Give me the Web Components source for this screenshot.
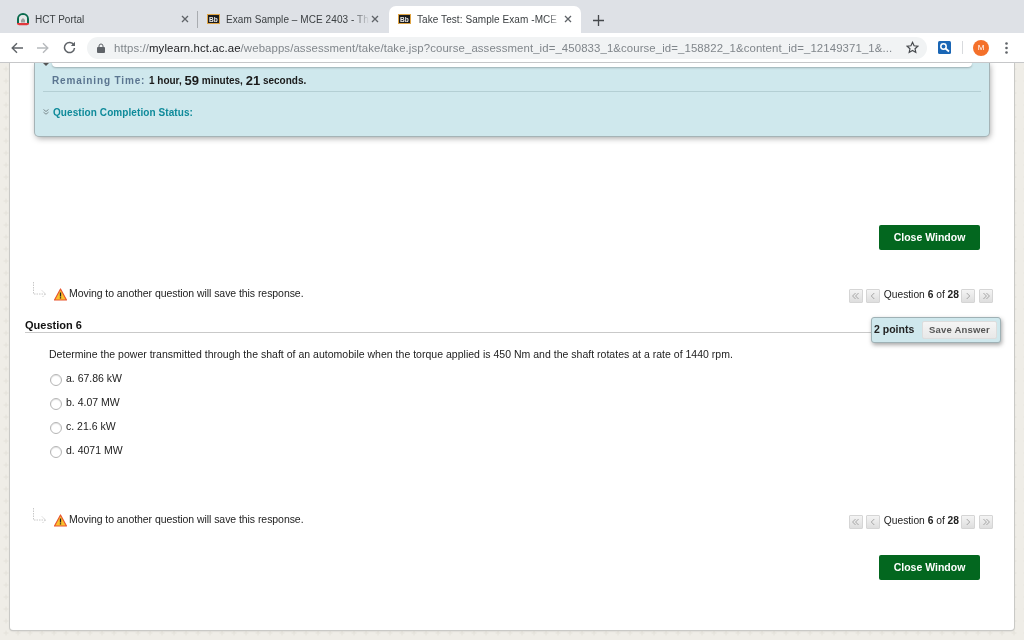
<!DOCTYPE html>
<html><head><meta charset="utf-8"><style>
html,body{margin:0;padding:0;width:1024px;height:640px;overflow:hidden;background:#fff;font-family:"Liberation Sans",Arial,sans-serif}
body{display:flex;flex-direction:column}
</style></head><body>
<browser-chrome></browser-chrome>
<page-view>
  <test-status></test-status>
  <close-bar style="--top:89px"></close-bar>
  <nav-row style="--top:33px"></nav-row>
  <question-block></question-block>
  <nav-row style="--top:47px"></nav-row>
  <close-bar style="--top:26px"></close-bar>
</page-view>
<script>
const def=(n,css,html)=>customElements.define(n,class extends HTMLElement{constructor(){super();this.attachShadow({mode:'open'}).innerHTML=`<style>${css}</style>${html}`}});
const bb=`<svg width="13" height="10" viewBox="0 0 13 10"><rect x=".5" y=".5" width="12" height="9" fill="#1c1c1c" stroke="#e0a545"/><text x="6.500" y="7.500" font-size="6.500" font-weight="700" fill="#eee" text-anchor="middle" font-family="Liberation Sans">Bb</text></svg>`;
const x=`<svg class="x" width="8" height="8" viewBox="0 0 8 8"><path d="M1 1l6 6M7 1l-6 6" stroke="#5f6368" stroke-width="1.300"/></svg>`;
def('browser-chrome',`
:host{display:block;flex:none;font-family:"Liberation Sans",sans-serif;position:relative;z-index:2;filter:blur(.25px)}
.strip{height:33px;background:#dee1e6;display:flex;align-items:flex-end;padding-left:8px;box-sizing:border-box}
.tab{height:26px;display:flex;align-items:center;box-sizing:border-box;font-size:10px;color:#3c4043;letter-spacing:.07px;white-space:nowrap;overflow:hidden}
.tab span{flex:1;overflow:hidden;margin-left:6px;-webkit-mask-image:linear-gradient(90deg,#000 88%,transparent 99%)}
.t1{width:189px;padding:0 0 2px 8px}.t1 .x{margin-right:8px}.t1 span{margin-left:5px;-webkit-mask-image:none;letter-spacing:0}
.sep{width:1px;height:17px;background:#a9acb0;margin:0 0 5px 0;flex:none}
.t2{width:185px;padding:0 0 2px 9px}.t2 .x{margin-right:4px}
.t3{width:192px;height:27px;background:#fff;border-radius:7px 7px 0 0;padding:0 0 1px 9px;margin-left:6px}.t3 .x{margin-right:9px}
.plus{margin:0 0 7px 12px;flex:none}
.tool{height:30px;background:#fff;border-bottom:1px solid #c6c7c9;display:flex;align-items:center;box-sizing:border-box;padding-left:11px;position:relative}
.omni{width:840px;height:22px;margin-left:11px;background:#f1f3f4;border-radius:11px;display:flex;align-items:center;box-sizing:border-box;padding:0 8px 0 10px;font-size:11.400px;letter-spacing:.1px;color:#80868b;white-space:nowrap}
.omni b{font-weight:400;color:#202124}
.omni .u{flex:1;overflow:hidden;margin-left:9px}
.ext{width:13px;height:13px;margin-left:11px;flex:none}
.div{width:1px;height:13px;background:#d8dadd;margin:0 10px 0 11px;flex:none}
.av{width:16px;height:16px;border-radius:50%;background:#f4702a;color:#fff;font-size:8px;display:flex;align-items:center;justify-content:center;flex:none}
.dots{margin-left:16px;flex:none}
svg{flex:none;display:block}
`,`<div class="strip">
<div class="tab t1"><svg width="14" height="14" viewBox="0 0 14 14"><path d="M1 11V7a6 6 0 0 1 12 0v4h-2V7a4 4 0 0 0-8 0v4z" fill="#0b6b4e"/><path d="M3 11V7.200a4 4 0 0 1 8 0V11z" fill="#e6e8e8"/><path d="M5 10.500V8l2-2 2 2v2.500z" fill="#9aa09e"/><path d="M1 11h12v1.300l-2 1H3l-2-1z" fill="#e2393d"/></svg><span>HCT Portal</span>${x}</div>
<div class="sep"></div>
<div class="tab t2">${bb}<span>Exam Sample – MCE 2403 - Th</span>${x}</div>
<div class="tab t3">${bb}<span>Take Test: Sample Exam -MCE</span>${x}</div>
<svg class="plus" width="11" height="11" viewBox="0 0 11 11"><path d="M5.500 0v11M0 5.500h11" stroke="#45484c" stroke-width="1.300"/></svg>
</div>
<div class="tool">
<svg width="12" height="12" viewBox="0 0 12 12"><path d="M12 6H1.500M6 1.200 1.200 6 6 10.800" fill="none" stroke="#5f6368" stroke-width="1.400"/></svg>
<svg style="margin-left:14px" width="12" height="12" viewBox="0 0 12 12"><path d="M0 6h10.500M6 1.200 10.800 6 6 10.800" fill="none" stroke="#b7babd" stroke-width="1.400"/></svg>
<svg style="margin-left:14px" width="13" height="13" viewBox="0 0 13 13"><path d="M10.800 4A5 5 0 1 0 11.500 7" fill="none" stroke="#5f6368" stroke-width="1.500"/><path d="M12 .8V5H7.800z" fill="#5f6368"/></svg>
<div class="omni"><svg width="8" height="10" viewBox="0 0 8 10"><path d="M2 4.500V3a2 2 0 0 1 4 0v1.500" fill="none" stroke="#5f6368"/><rect y="4" width="8" height="6" rx="1" fill="#5f6368"/></svg>
<div class="u">https://<b>mylearn.hct.ac.ae</b>/webapps/assessment/take/take.jsp?course_assessment_id=_450833_1&amp;course_id=_158822_1&amp;content_id=_12149371_1&amp;...</div>
<svg width="13" height="13" viewBox="0 0 24 24" style="margin-left:7px"><path d="M12 2.500l2.900 6.300 6.900.8-5.100 4.700 1.400 6.800L12 17.600 5.900 21.100l1.400-6.800-5.100-4.700 6.900-.8z" fill="none" stroke="#45484c" stroke-width="2.200"/></svg></div>
<svg class="ext" viewBox="0 0 13 13"><rect width="13" height="13" rx="1.500" fill="#1a66b5"/><circle cx="5.500" cy="5.500" r="2.700" fill="none" stroke="#fff" stroke-width="1.500"/><path d="M7.500 7.500 11 10.500" stroke="#fff" stroke-width="1.800"/></svg>
<div class="div"></div><div class="av">M</div>
<svg class="dots" width="3" height="12" viewBox="0 0 3 12"><circle cx="1.500" cy="1.500" r="1.300" fill="#5f6368"/><circle cx="1.500" cy="6" r="1.300" fill="#5f6368"/><circle cx="1.500" cy="10.500" r="1.300" fill="#5f6368"/></svg>
</div>`);
def('page-view',`
:host{display:block;flex:1;min-height:0;overflow:hidden;box-sizing:border-box;padding:0 10px 10px;filter:blur(.3px);
background-color:#efede7;background-image:url("data:image/svg+xml,%3Csvg xmlns='http://www.w3.org/2000/svg' width='12' height='12'%3E%3Cpath d='M6 3.500v5M3.500 6h5' stroke='%23e4e2da' stroke-width='1'/%3E%3C/svg%3E");background-size:12px 12px}
.panel{height:100%;background:#fff;border-radius:0 0 3px 3px;box-shadow:0 0 0 1px #c9c9c6,0 1px 2px rgba(0,0,0,.2);box-sizing:border-box;overflow:hidden}
`,`<div class="panel"><slot></slot></div>`);
def('test-status',`
:host{display:block;margin:0 25px 0;height:73px;background:#cfe8ed;border-radius:0 0 4px 4px;box-shadow:0 0 0 1px #a5b3b6,1px 2px 6px rgba(0,0,0,.38);position:relative;padding:0 17px 0 8px;box-sizing:border-box;font-size:10px}
.top{height:4px;margin:0 0 0 9px;background:#fff;border-radius:0 0 4px 4px;box-shadow:0 1px 2px rgba(0,0,0,.25)}
.time{height:24px;display:flex;align-items:center;margin-left:9px;font-weight:700;color:#1a1a1a;padding-top:2px;box-sizing:border-box;white-space:pre}
.time .l{color:#5b7590;letter-spacing:.86px}
.time big{font-size:13px}
.line{height:1px;background:#b4cfd4;margin-right:-9px}
.st{display:flex;align-items:center;height:40px;font-weight:700;color:#0e8a9a;box-sizing:border-box;letter-spacing:.08px}
.st svg{margin-right:4px}
.tick{position:absolute;left:8px;top:0;width:0;height:0;border:3px solid transparent;border-top:3px solid #555}
`,`<div class="tick"></div><div class="top"></div><div class="time"><span class="l">Remaining Time: </span>1 hour, <big>59</big> minutes, <big>21</big> seconds.</div><div class="line"></div>
<div class="st"><svg width="6" height="6" viewBox="0 0 6 6"><path d="M.5 .5l2.500 2 2.500-2M.5 3.200l2.500 2 2.500-2" fill="none" stroke="#7d8c90"/></svg>Question Completion Status:</div>`);
def('close-bar',`
:host{margin-top:var(--top);height:25px;display:flex;justify-content:flex-end;padding-right:34px}
.b{width:101px;height:25px;padding-bottom:2px;box-sizing:border-box;background:#03671f;border-radius:2px;color:#fff;font-weight:700;font-size:10.500px;display:flex;align-items:center;justify-content:center;font-family:"Liberation Sans",sans-serif}
`,`<div class="b">Close Window</div>`);
const arrow=`<svg width="16" height="16" viewBox="0 0 16 16"><path d="M1.500 0v12h12M10 8.500l3.500 3.500-3.500 3.500" fill="none" stroke="#c8c8c8" stroke-dasharray="1.500 1"/></svg>`;
const warn=`<svg width="13" height="13" viewBox="0 0 13 13"><path d="M6.500 1 12.500 12H.5z" fill="#fbc02d" stroke="#e8552f" stroke-width="1.200" stroke-linejoin="round"/><path d="M6.500 4.500v4M6.500 9.300v1.200" stroke="#222" stroke-width="1.300"/></svg>`;
const pg=(d)=>`<svg class="p" width="14" height="14" viewBox="0 0 14 14"><path d="${d}" fill="none" stroke="#999"/></svg>`;
def('nav-row',`
:host{display:flex;margin-top:var(--top);height:20px;align-items:center;padding:0 21px 0 22px;font-size:10.500px;color:#222}
.m{display:flex;align-items:center;flex:1;letter-spacing:-.06px}
.m svg:first-child{margin-right:6px;margin-top:-6px}.m svg:nth-child(2){margin-right:2px;margin-top:2px}
.pg{display:flex;align-items:center;gap:3px;white-space:pre;margin-top:5px;font-size:10.250px}
.p{background:linear-gradient(#f4f4f4,#dedede);border:1px solid #d5d5d5;border-radius:1px;box-sizing:border-box;}
.t{margin:0 -1px 2px 1px}
.p:last-child{margin-left:1px}
`,`<div class="m">${arrow}${warn}<span>Moving to another question will save this response.</span></div>
<div class="pg">${pg('M6.500 3.500 3 7l3.500 3.500M10 3.500 6.500 7l3.500 3.500')}${pg('M8.500 3.500 5 7l3.500 3.500')}<span class="t">Question <b>6</b> of <b>28</b></span>${pg('M5.500 3.500 9 7l-3.500 3.500')}${pg('M4 3.500 7.500 7 4 10.500M7.500 3.500 11 7l-3.500 3.500')}</div>`);
def('question-block',`
:host{display:block;margin-top:15px;padding:0 14px 0 15px;font-size:10.500px;color:#222;position:relative}
.h{height:14px;border-bottom:1px solid #c9c9c9;font-weight:700;font-size:11px;color:#111;line-height:14px}
.pts{position:absolute;right:13px;top:-1px;width:130px;height:26px;box-sizing:border-box;background:#cfe8ed;border:1px solid #9fb1b5;border-radius:3px;box-shadow:1px 2px 4px rgba(0,0,0,.35);display:flex;align-items:center;justify-content:space-between;padding:0 3px 0 2px;font-weight:700;font-size:10.500px;color:#222}
.pl{margin-bottom:2px}
.sv{width:75px;height:18px;background:linear-gradient(#f5f5f5,#e8e8e8);border-radius:2px;border:1px solid #ddd;box-sizing:border-box;display:flex;align-items:center;justify-content:center;font-size:9.500px;color:#555;letter-spacing:.2px;padding-bottom:1px}
.q{margin:15px 0 6px 24px;line-height:12px;height:12px;letter-spacing:.015px}
.o{display:flex;align-items:center;height:24px;margin-left:25px}
.r{width:12px;height:12px;border-radius:50%;border:1px solid #b5b5b5;box-sizing:border-box;background:#fff;margin:3px 4px 0 0;box-shadow:inset 0 1px 1px #e2e2e2}
`,`<div class="h">Question 6</div><div class="pts"><span class="pl">2 points</span><div class="sv">Save Answer</div></div>
<div class="q">Determine the power transmitted through the shaft of an automobile when the torque applied is 450 Nm and the shaft rotates at a rate of 1440 rpm.</div>
<div class="o"><div class="r"></div>a. 67.86 kW</div><div class="o"><div class="r"></div>b. 4.07 MW</div><div class="o"><div class="r"></div>c. 21.6 kW</div><div class="o"><div class="r"></div>d. 4071 MW</div>`);
</script></body></html>
